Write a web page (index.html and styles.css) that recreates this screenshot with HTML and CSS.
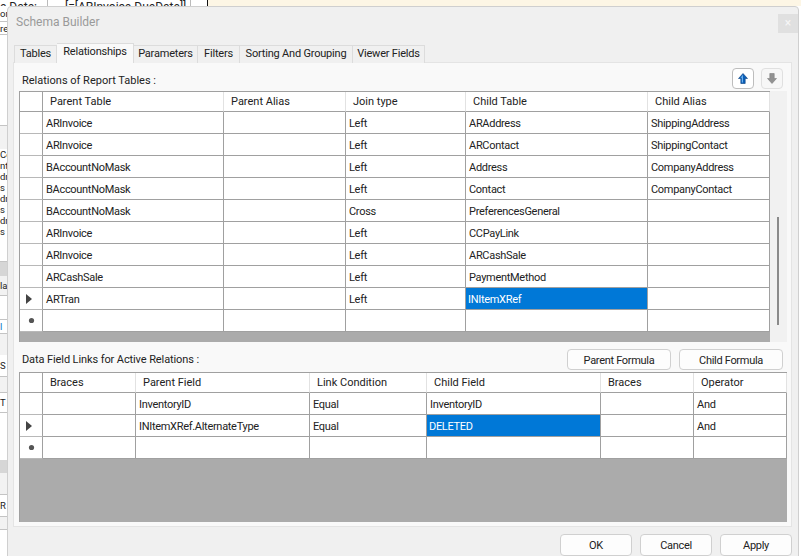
FILE: index.html
```html
<!DOCTYPE html>
<html lang="en">
<head>
<meta charset="utf-8">
<title>Schema Builder</title>
<link rel="stylesheet" href="styles.css">
</head>
<body>
<div class="desktop">
  <div class="report-top">
    <div class="report-cells"><span class="top-a">e Date: . .</span><span class="top-b">[=[ARInvoice.DueDate]].</span><span class="top-c">. .</span></div>
    <div class="report-note"></div>
  </div>
  <div class="report-side">
    <div class="side-row h16 line">or</div>
    <div class="side-row h13 line">re</div>
    <div class="side-row h91 line"></div>
    <div class="side-row h23 shade"></div>
    <div class="side-row h11">Co</div>
    <div class="side-row h11">nt</div>
    <div class="side-row h11">dr</div>
    <div class="side-row h11">s</div>
    <div class="side-row h11">dr</div>
    <div class="side-row h11">s</div>
    <div class="side-row h11">dr</div>
    <div class="side-row h11">s</div>
    <div class="side-row h25 line"></div>
    <div class="side-row h14 block"></div>
    <div class="side-row h20 shade line">la</div>
    <div class="side-row h24 line"></div>
    <div class="side-row h14 line blue">l</div>
    <div class="side-row h21 shade"></div>
    <div class="side-row h22 line">S</div>
    <div class="side-row h16 shade line"></div>
    <div class="side-row h20 line">T</div>
    <div class="side-row h47"></div>
    <div class="side-row h13 block"></div>
    <div class="side-row h22 shade line"></div>
    <div class="side-row h22 line">R</div>
    <div class="side-row h13 shade line"></div>
    <div class="side-row h26"></div>
  </div>

  <section class="dialog">
    <header class="titlebar">
      <h1 class="title">Schema Builder</h1>
      <div class="close">×</div>
    </header>
    <nav class="tabs">
      <div class="tab tab-tables">Tables</div>
      <div class="tab tab-rel active">Relationships</div>
      <div class="tab tab-par">Parameters</div>
      <div class="tab tab-fil">Filters</div>
      <div class="tab tab-sort">Sorting And Grouping</div>
      <div class="tab tab-view">Viewer Fields</div>
    </nav>
    <main class="panel">
      <div class="toolbar toolbar-top">
        <div class="label">Relations of Report Tables :</div>
        <div class="tools">
          <button class="icon-btn focus"><svg width="10" height="11" viewBox="0 0 10 11"><path d="M5 .5 9.5 5.5H7.2V10.5H2.8V5.5H.5Z" fill="#0b5fb8" stroke="#083f80" stroke-width=".6"/><path d="M5 1.8 2.6 4.8H3.8V9.5H5Z" fill="#6db2ee"/></svg></button>
          <button class="icon-btn"><svg width="10" height="11" viewBox="0 0 10 11"><path d="M5 10.5 9.5 5.5H7.2V.5H2.8V5.5H.5Z" fill="#929292" stroke="#7f7f7f" stroke-width=".6"/></svg></button>
        </div>
      </div>
      <div class="grid-row">
        <div class="grid grid-rel">
          <div class="cell head rowhead"></div><div class="cell head">Parent Table</div><div class="cell head">Parent Alias</div><div class="cell head">Join type</div><div class="cell head">Child Table</div><div class="cell head">Child Alias</div>

          <div class="cell rowhead"></div><div class="cell">ARInvoice</div><div class="cell"></div><div class="cell">Left</div><div class="cell">ARAddress</div><div class="cell">ShippingAddress</div>
          <div class="cell rowhead"></div><div class="cell">ARInvoice</div><div class="cell"></div><div class="cell">Left</div><div class="cell">ARContact</div><div class="cell">ShippingContact</div>
          <div class="cell rowhead"></div><div class="cell">BAccountNoMask</div><div class="cell"></div><div class="cell">Left</div><div class="cell">Address</div><div class="cell">CompanyAddress</div>
          <div class="cell rowhead"></div><div class="cell">BAccountNoMask</div><div class="cell"></div><div class="cell">Left</div><div class="cell">Contact</div><div class="cell">CompanyContact</div>
          <div class="cell rowhead"></div><div class="cell">BAccountNoMask</div><div class="cell"></div><div class="cell">Cross</div><div class="cell">PreferencesGeneral</div><div class="cell"></div>
          <div class="cell rowhead"></div><div class="cell">ARInvoice</div><div class="cell"></div><div class="cell">Left</div><div class="cell">CCPayLink</div><div class="cell"></div>
          <div class="cell rowhead"></div><div class="cell">ARInvoice</div><div class="cell"></div><div class="cell">Left</div><div class="cell">ARCashSale</div><div class="cell"></div>
          <div class="cell rowhead"></div><div class="cell">ARCashSale</div><div class="cell"></div><div class="cell">Left</div><div class="cell">PaymentMethod</div><div class="cell"></div>
          <div class="cell rowhead"><svg class="marker arrow" width="6" height="10" viewBox="0 0 6 10"><path d="M0 0 6 5 0 10Z" fill="#444"/></svg></div><div class="cell">ARTran</div><div class="cell"></div><div class="cell">Left</div><div class="cell selected">INItemXRef</div><div class="cell"></div>
          <div class="cell rowhead"><svg class="marker" width="7" height="7" viewBox="0 0 7 7"><circle cx="3.5" cy="3.5" r="2.6" fill="#555"/></svg></div><div class="cell"></div><div class="cell"></div><div class="cell"></div><div class="cell"></div><div class="cell"></div>
          <div class="grid-fill fill-rel"></div>
        </div>
        <div class="scrollbar"><div class="thumb"></div></div>
      </div>
      <div class="toolbar toolbar-mid">
        <div class="label label-mid">Data Field Links for Active Relations :</div>
        <div class="tools tools-wide">
          <button class="btn btn-formula">Parent Formula</button>
          <button class="btn btn-formula">Child Formula</button>
        </div>
      </div>
      <div class="grid grid-links">
        <div class="cell head rowhead"></div><div class="cell head">Braces</div><div class="cell head">Parent Field</div><div class="cell head">Link Condition</div><div class="cell head">Child Field</div><div class="cell head">Braces</div><div class="cell head">Operator</div>

        <div class="cell rowhead"></div><div class="cell"></div><div class="cell">InventoryID</div><div class="cell">Equal</div><div class="cell">InventoryID</div><div class="cell"></div><div class="cell">And</div>
        <div class="cell rowhead"><svg class="marker arrow" width="6" height="10" viewBox="0 0 6 10"><path d="M0 0 6 5 0 10Z" fill="#444"/></svg></div><div class="cell"></div><div class="cell">INItemXRef.AlternateType</div><div class="cell">Equal</div><div class="cell selected">DELETED</div><div class="cell"></div><div class="cell">And</div>
        <div class="cell rowhead"><svg class="marker" width="7" height="7" viewBox="0 0 7 7"><circle cx="3.5" cy="3.5" r="2.6" fill="#555"/></svg></div><div class="cell"></div><div class="cell"></div><div class="cell"></div><div class="cell"></div><div class="cell"></div><div class="cell"></div>
        <div class="grid-fill fill-links"></div>
      </div>
    </main>
    <footer class="actions">
      <button class="btn btn-action">OK</button>
      <button class="btn btn-action">Cancel</button>
      <button class="btn btn-action">Apply</button>
    </footer>
  </section>
</div>
</body>
</html>
```
FILE: styles.css
```css
* { box-sizing: border-box; }
html, body { margin: 0; padding: 0; }
body { background: #fff; font-family: Roboto, "Noto Sans", sans-serif; font-size: 11px; color: #222; }
.desktop { position: relative; width: 801px; height: 556px; overflow: hidden; background: #fff; }

/* Report designer behind the dialog */
.report-top { position: absolute; left: 0; top: 0; width: 801px; height: 6px; display: flex; overflow: hidden; }
.report-cells { width: 208px; height: 14px; display: flex; border-right: 1px solid #111; font-size: 12px; line-height: 14px; white-space: nowrap; }
.top-a { width: 47px; }
.top-b { width: 143px; padding-left: 17px; border-left: 1px solid #bbb; }
.top-c { flex: 1; padding-left: 3px; border-left: 1px solid #bbb; }
.report-note { flex: 1; background: #fdf6e5; }
.report-side { position: absolute; left: 0; top: 6px; width: 7px; display: flex; flex-direction: column; overflow: hidden; }
.side-row { display: flex; justify-content: flex-start; align-items: center; font-size: 9.5px; line-height: 11px; overflow: hidden; flex: none; white-space: nowrap; }
.line { border-bottom: 1px solid #c4c4c4; }
.shade { background: #f2f2f2; }
.block { background: #d6d6d6; }
.blue { color: #0a78c8; }
.h11 { height: 11px; } .h13 { height: 13px; } .h14 { height: 14px; } .h16 { height: 16px; }
.h20 { height: 20px; } .h21 { height: 21px; } .h22 { height: 22px; } .h23 { height: 23px; }
.h24 { height: 24px; } .h25 { height: 25px; } .h26 { height: 26px; } .h47 { height: 47px; } .h91 { height: 91px; }

/* Dialog window */
.dialog { position: absolute; left: 7px; top: 6px; width: 792px; height: 560px; background: #f0f0f0; border: 1px solid #cfcfcf; border-radius: 4px 4px 0 0; display: flex; flex-direction: column; }
.titlebar { height: 36px; flex: none; display: flex; justify-content: space-between; padding-left: 8px; }
.title { margin: 0; font-size: 12px; font-weight: 400; line-height: 17px; padding-top: 7px; color: #9a9a9a; }
.close { width: 20px; height: 19px; margin-top: 7px; background: #e0e0e0; color: #f6f6f6; font-size: 12px; line-height: 19px; text-align: center; }

.tabs { display: flex; height: 19px; flex: none; margin-left: 6px; align-items: flex-end; position: relative; z-index: 1; }
.tab { height: 18px; margin-bottom: -1px; background: #f0f0f0; border: 1px solid #dcdcdc; border-left-width: 0; border-bottom: 0; text-align: center; line-height: 16px; letter-spacing: -.2px; white-space: nowrap; }
.tab:first-child { border-left-width: 1px; }
.tab.active { height: 20px; background: #f9f9f9; line-height: 16px; margin-bottom: -1px; border-left-width: 0; }
.tab-tables { width: 43px; } .tab-rel { width: 77px; } .tab-par { width: 64px; } .tab-fil { width: 42px; } .tab-sort { width: 113px; } .tab-view { width: 72px; }

.panel { flex: none; width: 779px; margin-left: 5px; height: 465px; background: #f9f9f9; border: 1px solid #e4e4e4; padding: 0 0 0 5px; }
.toolbar { display: flex; justify-content: space-between; align-items: flex-start; }
.toolbar-top { height: 28px; padding: 5px 8px 0 3px; width: 772px; }
.toolbar-mid { height: 30px; padding: 7px 8px 0 3px; width: 772px; }
.label { line-height: 15px; padding-top: 5px; white-space: nowrap; }
.label-mid { padding-top: 3px; letter-spacing: -.1px; }
.tools { display: flex; gap: 7px; }
.tools-wide { gap: 8px; }
.icon-btn { width: 22px; height: 21px; padding: 0; background: #f7f7f7; border: 1px solid #e0e0e0; border-radius: 4px; display: flex; align-items: center; justify-content: center; }
.icon-btn.focus { background: #fff; border-color: #bdbdbd; }
.btn { font-family: inherit; font-size: 11px; letter-spacing: -.3px; color: #222; background: #fdfdfd; border: 1px solid #d0d0d0; border-radius: 4px; padding: 0; }
.btn-formula { width: 104px; height: 21px; padding-top: 2px; }
.btn-action { width: 72px; height: 22px; }

.grid-row { display: flex; width: 768px; height: 251px; }
.scrollbar { width: 17px; height: 251px; background: #f1f1f1; padding: 126px 0 0 7px; }
.thumb { width: 2px; height: 108px; background: #8a8a8a; }
.grid { display: grid; background: #ababab; border-top: 1px solid #a0a0a0; border-left: 1px solid #a0a0a0; grid-auto-rows: 22px; align-content: start; }
.grid-rel { width: 751px; height: 251px; grid-template-columns: 23px 181px 122px 120px 182px 122px; grid-template-rows: 20px; }
.grid-links { width: 768px; height: 150px; grid-template-columns: 23px 93px 174px 117px 174px 93px 93px; grid-template-rows: 20px; }
.cell { background: #fff; border-right: 1px solid #a0a0a0; border-bottom: 1px solid #a0a0a0; padding: 2px 3px 0; line-height: 19px; letter-spacing: -.3px; white-space: nowrap; overflow: hidden; }
.head { padding: 0 3px 0 7px; line-height: 19px; letter-spacing: 0; border-right-color: #e2e2e2; }
.rowhead { padding: 0; display: flex; align-items: center; justify-content: center; border-right-color: #a0a0a0; border-bottom-color: #b8b8b8; }
.head.rowhead { border-right-color: #a0a0a0; border-bottom-color: #a0a0a0; }
.selected { background: #0078d7; color: #fff; padding-left: 2px; }
.marker { display: block; }
.arrow { margin-right: 5px; }
.grid-fill { grid-column: 1 / -1; background: #ababab; }
.fill-rel { height: 10px; }
.fill-links { height: 63px; }

.actions { display: flex; justify-content: flex-end; gap: 8px; padding: 7px 6px 0 0; }
```
